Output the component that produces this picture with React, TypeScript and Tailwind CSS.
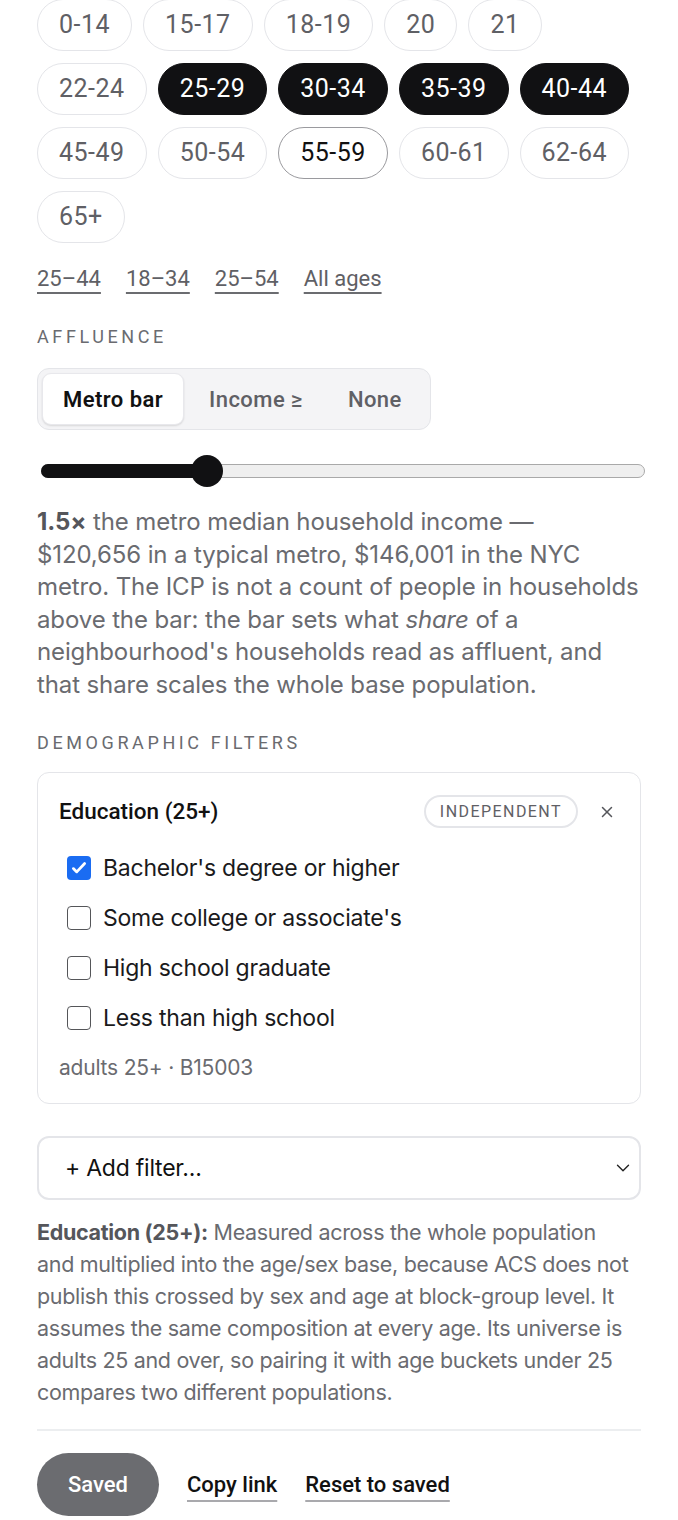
import { ChevronDown, X } from 'lucide-react';

const rows: { label: string; state?: 'on' | 'focus' }[][] = [
  [{ label: '0-14' }, { label: '15-17' }, { label: '18-19' }, { label: '20' }, { label: '21' }],
  [
    { label: '22-24' },
    { label: '25-29', state: 'on' },
    { label: '30-34', state: 'on' },
    { label: '35-39', state: 'on' },
    { label: '40-44', state: 'on' }
  ],
  [{ label: '45-49' }, { label: '50-54' }, { label: '55-59', state: 'focus' }, { label: '60-61' }, { label: '62-64' }],
  [{ label: '65+' }]
];

const presets = ['25–44', '18–34', '25–54', 'All ages'];

const options = [
  { label: "Bachelor's degree or higher", checked: true },
  { label: "Some college or associate's", checked: false },
  { label: 'High school graduate', checked: false },
  { label: 'Less than high school', checked: false }
];

function Chip({ label, state }: { label: string; state?: 'on' | 'focus' }) {
  const cls =
    state === 'on'
      ? 'bg-[#111113] border-[#111113] text-white'
      : state === 'focus'
        ? 'bg-white border-[#9a9a9e] border-2 px-[20px] text-[#111]'
        : 'bg-white border-[#e4e5e9] text-[#5f6065]';
  return (
    <button
      className={`h-[52px] px-[21px] rounded-full border-[1.5px] text-[25px] font-[Roboto,sans-serif] tracking-[0.02em] flex items-center ${cls}`}
    >
      {label}
    </button>
  );
}

function Eyebrow({ children }: { children: string }) {
  return (
    <p className="text-[18px] leading-[22px] tracking-[0.2em] uppercase text-[#6a6b70] font-[Roboto,sans-serif]">
      {children}
    </p>
  );
}

export default function App() {
  return (
    <div className="w-[678px] bg-white px-[37px] font-[Inter,sans-serif]">
      <div className="flex flex-col gap-y-[12px] -mt-[1px]">
        {rows.map((r, i) => (
          <div key={i} className="flex gap-x-[11px]">
            {r.map((c) => (
              <Chip key={c.label} label={c.label} state={c.state} />
            ))}
          </div>
        ))}
      </div>

      <div className="flex gap-[25px] mt-[23px] text-[22px] leading-[26px] text-[#5f6065] font-[Roboto,sans-serif]">
        {presets.map((p) => (
          <span key={p} className="underline decoration-[#6b6c70] decoration-2 underline-offset-[6px]">
            {p}
          </span>
        ))}
      </div>

      <div className="mt-[34px]">
        <Eyebrow>Affluence</Eyebrow>
      </div>

      <div className="mt-[20px] inline-flex items-center p-[4px] bg-[#f4f4f6] border border-[#e4e5e9] rounded-[12px] font-[Roboto,sans-serif] text-[22px] tracking-[0.02em]">
        <div className="h-[52px] px-[20px] flex items-center bg-white rounded-[9px] shadow-[0_1px_2px_rgba(0,0,0,0.12)] border border-[#e8e8ec] font-semibold text-[#111]">
          Metro bar
        </div>
        <div className="h-[52px] pl-[25px] pr-[23px] flex items-center text-[#5f6065] font-medium">Income ≥</div>
        <div className="h-[52px] pl-[22px] pr-[24px] flex items-center text-[#5f6065] font-medium">None</div>
      </div>

      <div className="mt-[25px] relative h-[32px] ml-[4px] mr-[-4px]">
        <div className="absolute left-0 right-0 top-[9px] h-[14px] rounded-full bg-[#efefef] border border-[#a9a9a9]" />
        <div className="absolute left-0 w-[170px] top-[9px] h-[14px] rounded-full bg-[#111113]" />
        <div className="absolute left-[150px] top-0 w-[32px] h-[32px] rounded-full bg-[#111113]" />
      </div>

      <p className="mt-[19px] whitespace-nowrap text-[24px] leading-[32.5px] tracking-[-0.005em] text-[#6a6b70]">
        <b className="font-bold text-[#55565b]">1.5×</b> the metro median household income —<br />
        $120,656 in a typical metro, $146,001 in the NYC
        <br />
        metro. The ICP is not a count of people in households
        <br />
        above the bar: the bar sets what <i>share</i> of a<br />
        neighbourhood's households read as affluent, and
        <br />
        that share scales the whole base population.
      </p>

      <div className="mt-[31px]">
        <Eyebrow>Demographic filters</Eyebrow>
      </div>

      <div className="mt-[18px] border-[1.5px] border-[#e4e5e9] rounded-[12px] pl-[21px] pr-[24px] pt-[22px] pb-[22px]">
        <div className="flex items-center justify-between">
          <h3 className="text-[22.5px] font-medium text-[#111] font-[Roboto,sans-serif]">Education (25+)</h3>
          <div className="flex items-center gap-[20px]">
            <span className="h-[33px] px-[14px] flex items-center rounded-full border-2 border-[#e4e5e9] text-[16px] tracking-[0.09em] text-[#5f6065] font-[Roboto,sans-serif]">
              INDEPENDENT
            </span>
            <X className="w-[18px] h-[18px] text-[#55565b]" strokeWidth={2} />
          </div>
        </div>
        <div className="mt-[24px] flex flex-col gap-[20px] pl-[8px]">
          {options.map((o) => (
            <label key={o.label} className="flex items-center gap-[12px] h-[30px]">
              {o.checked ? (
                <span className="w-[24px] h-[24px] rounded-[4px] bg-[#1a6cf2] flex items-center justify-center">
                  <svg viewBox="0 0 16 16" className="w-[18px] h-[18px]">
                    <path d="M3 8.5l3 3 7-7.5" fill="none" stroke="white" strokeWidth="2.4" strokeLinecap="round" strokeLinejoin="round" />
                  </svg>
                </span>
              ) : (
                <span className="w-[24px] h-[24px] rounded-[4px] border-[1.5px] border-[#555659] bg-white" />
              )}
              <span className="text-[23px] tracking-[-0.01em] text-[#1a1a1c]">{o.label}</span>
            </label>
          ))}
        </div>
        <p className="mt-[22px] text-[21px] leading-[26px] tracking-[-0.01em] text-[#6a6b70]">adults 25+ · B15003</p>
      </div>

      <div className="mt-[32px] h-[64px] border-2 border-[#e4e5e9] rounded-[12px] flex items-center justify-between pl-[26px] pr-[5px]">
        <span className="text-[23px] tracking-[-0.01em] text-[#111]">+ Add filter...</span>
        <ChevronDown className="w-[22px] h-[22px] text-[#222]" strokeWidth={1.5} />
      </div>

      <p className="mt-[16px] whitespace-nowrap text-[21.5px] leading-[32px] tracking-[-0.015em] text-[#6a6b70]">
        <b className="font-bold text-[#55565b]">Education (25+):</b> Measured across the whole population
        <br />
        and multiplied into the age/sex base, because ACS does not
        <br />
        publish this crossed by sex and age at block-group level. It
        <br />
        assumes the same composition at every age. Its universe is
        <br />
        adults 25 and over, so pairing it with age buckets under 25
        <br />
        compares two different populations.
      </p>

      <div className="mt-[21px] h-[2px] bg-[#eceef0]" />

      <div className="mt-[22px] flex items-center gap-[28px] pb-[6px] font-[Roboto,sans-serif] text-[22px]">
        <button className="h-[63px] px-[31px] rounded-full bg-[#6b6c70] text-white font-medium">Saved</button>
        <span className="text-[#111] font-medium underline decoration-[#a9a9ad] decoration-2 underline-offset-[8px]">
          Copy link
        </span>
        <span className="text-[#111] font-medium underline decoration-[#a9a9ad] decoration-2 underline-offset-[8px]">
          Reset to saved
        </span>
      </div>
    </div>
  );
}
